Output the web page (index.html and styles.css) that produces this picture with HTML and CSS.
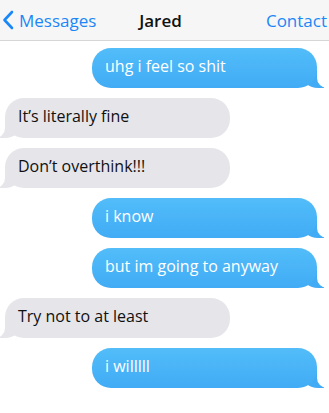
FILE: index.html
```html
<!DOCTYPE html>
<html>
<head>
<meta charset="utf-8">
<link rel="stylesheet" href="styles.css">
</head>
<body>
<header class="nav">
  <a class="nav-back">
    <svg class="chev" width="12" height="20" viewBox="0 0 12 20"><path d="M10 2 L2.5 10 L10 18" fill="none" stroke="#1a87f8" stroke-width="2.6" stroke-linecap="round" stroke-linejoin="round"/></svg>
    <span>Messages</span>
  </a>
  <div class="nav-title">Jared</div>
  <a class="nav-action">Contact</a>
</header>
<main class="thread">
  <div class="msg sent">uhg i feel so shit</div>
  <div class="msg recv">It’s literally fine</div>
  <div class="msg recv">Don’t overthink!!!</div>
  <div class="msg sent">i know</div>
  <div class="msg sent">but im going to anyway</div>
  <div class="msg recv">Try not to at least</div>
  <div class="msg sent">i willlll</div>
</main>
</body>
</html>
```
FILE: styles.css
```css
* { box-sizing: border-box; }
html { background: #fff; }
html, body { margin: 0; padding: 0; }
body { font-family: "Open Sans", "Noto Sans", sans-serif; width: 329px; overflow: hidden; }

.nav {
  height: 41px;
  background: #f6f6f6;
  border-bottom: 1px solid #d6d6d6;
  display: grid;
  grid-template-columns: 1fr auto 1fr;
  align-items: center;
}
.nav-back {
  display: flex;
  align-items: center;
  gap: 5px;
  padding-left: 2px;
  color: #1a87f8;
  font-size: 17px;
}
.chev { display: block; }
.nav-title {
  font-size: 17px;
  font-weight: 600;
  color: #111;
  padding-right: 8px;
}
.nav-action {
  justify-self: end;
  color: #1a87f8;
  font-size: 17px;
  padding-right: 2px;
}

.thread {
  display: flex;
  flex-direction: column;
  gap: 10px;
  padding-top: 7px;
}
.msg {
  position: relative;
  width: 225px;
  height: 40px;
  border-radius: 19px;
  font-size: 16px;
  line-height: 36px;
  padding: 0 13px;
  white-space: nowrap;
}
.sent {
  align-self: flex-end;
  margin-right: 12px;
  color: #fff;
  background: linear-gradient(#52bdf9, #41abf5);
}
.recv {
  align-self: flex-start;
  margin-left: 5px;
  color: #111;
  background: #e6e5ea;
}
.msg::before, .msg::after {
  content: "";
  position: absolute;
  bottom: 0;
  height: 18px;
  z-index: -1;
}
.sent::before {
  right: -7px;
  width: 22px;
  background: #41abf5;
  border-bottom-left-radius: 16px 14px;
}
.sent::after {
  right: -26px;
  width: 26px;
  background: #fff;
  border-bottom-left-radius: 10px;
}
.recv::before {
  left: -6px;
  width: 22px;
  background: #e6e5ea;
  border-bottom-right-radius: 16px 14px;
}
.recv::after {
  left: -26px;
  width: 26px;
  background: #fff;
  border-bottom-right-radius: 10px;
}
```
